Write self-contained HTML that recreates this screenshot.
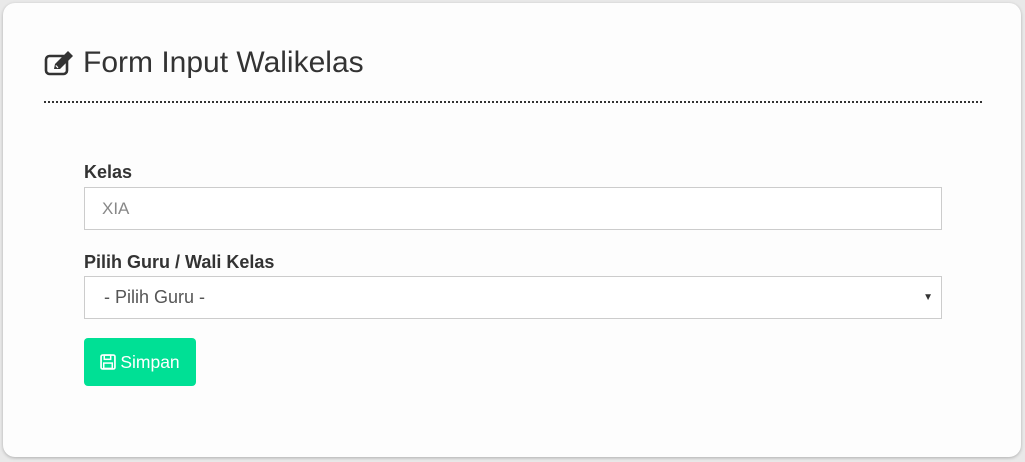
<!DOCTYPE html>
<html><head><meta charset="utf-8"><style>
*{box-sizing:border-box;margin:0;padding:0}
body{width:1025px;height:462px;background:#e9e9e9;font-family:"Liberation Sans",sans-serif;color:#333;position:relative;overflow:hidden}
.card{position:absolute;left:3px;top:3px;width:1018px;height:454px;background:#fdfdfd;border-radius:12px;box-shadow:0 1px 3px rgba(0,0,0,.25)}
h1{position:absolute;left:41px;top:42px;font-weight:normal;font-size:30px;line-height:36px;color:#333;display:flex;align-items:center}
h1 svg{margin-right:8px}
.hr{position:absolute;left:41px;top:98px;width:938px;border-top:2px dotted #333}
label{position:absolute;left:81px;font-weight:bold;font-size:18px;color:#333}
.inp{position:absolute;left:81px;width:858px;height:43px;border:1px solid #ccc;background:#fff;font-size:17px;padding-left:17px;line-height:41px}
.btn{position:absolute;left:81px;top:335px;width:112px;height:48px;background:#00e095;border-radius:4px;color:#fff;font-size:17.5px;display:flex;align-items:center;justify-content:center}
</style></head><body>
<div class="card">
<h1><svg width="31" height="27" viewBox="0 0 31 27"><rect x="2" y="6" width="21" height="18" rx="3.5" fill="none" stroke="#333" stroke-width="2.6"/><path d="M10 19 L11 14 L24 1 L29 6 L16 19 Z" fill="#333"/><path d="M11.8 15.5 L14 17.8" stroke="#fdfdfd" stroke-width="1.2"/></svg>Form Input Walikelas</h1>
<div class="hr"></div>
<label style="top:159px">Kelas</label>
<div class="inp" style="top:184px;color:#888">XIA</div>
<label style="top:249px">Pilih Guru / Wali Kelas</label>
<div class="inp" style="top:273px;color:#555;font-size:18px;padding-left:19px">- Pilih Guru -<span style="position:absolute;right:8px;top:0;font-size:10px;color:#333">▼</span></div>
<div class="btn"><svg width="16" height="16" viewBox="0 0 15 15" style="margin-right:4px"><rect x="1" y="1" width="13" height="13" rx="1.5" fill="none" stroke="#fff" stroke-width="1.6"/><rect x="4" y="1" width="6" height="4" fill="none" stroke="#fff" stroke-width="1.4"/><rect x="3.5" y="8.5" width="8" height="5" fill="none" stroke="#fff" stroke-width="1.4"/></svg>Simpan</div>
</div>
</body></html>
